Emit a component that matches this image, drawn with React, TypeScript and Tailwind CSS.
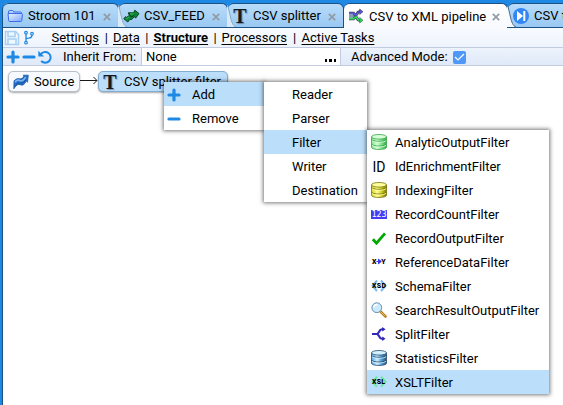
import React from "react";

type TabProps = {
  label: string;
  icon: React.ReactNode;
  className: string;
  active?: boolean;
  slant?: boolean;
  slantFill?: string;
  closable?: boolean;
};

function Tab({ label, icon, className, active, slant, slantFill = "#d8e9f8", closable = true }: TabProps) {
  return (
    <div
      className={`relative flex h-[25px] shrink-0 items-center rounded-t-[6px] border-t border-r border-[#1c5184] ${
        active ? "bg-linear-to-b from-white to-[#f8fafe]" : "border-b bg-linear-to-b from-[#b9dcf9] to-[#98c8f2]"
      } ${className}`}
    >
      {slant && (
        <svg className="absolute -left-px top-0 h-[23px] w-[9px]" viewBox="0 0 9 23">
          <path d="M0 1C2 4 2 8 3.5 13C4.5 18 6 22 9 23H0Z" fill={slantFill} />
          <path d="M0 1C2 4 2 8 3.5 13C4.5 18 6 22 9 23" fill="none" stroke={slantFill === "#f8fafe" ? "#496983" : "#8baac4"} strokeWidth="1" />
        </svg>
      )}
      <span className="relative flex h-4 w-4 shrink-0 items-center justify-center">{icon}</span>
      <span className="ml-[5px] mt-px whitespace-nowrap">{label}</span>
      {closable && (
        <svg className="absolute right-[7px] top-[9px] h-2 w-2" viewBox="0 0 8 8">
          <path d="M.8.8 7.2 7.2M7.2.8.8 7.2" stroke="#929ba3" strokeWidth="1.7" />
        </svg>
      )}
    </div>
  );
}

function FolderIcon() {
  return (
    <svg width="16" height="16" viewBox="0 0 16 16">
      <defs>
        <linearGradient id="folder" x1="0" y1="0" x2="1" y2="1">
          <stop stopColor="#eef4ff" />
          <stop offset="1" stopColor="#78a4ff" />
        </linearGradient>
      </defs>
      <path d="M1.5 12V4q0-1.5 1-1.5h3q1 0 1.3 1.5h6.7q1 0 1 1V12" fill="#b4ceff" stroke="#3c6ce8" />
      <path d="M1 5.5h13.6q.9 0 .8 1l-.6 6q-.1 1-1 1H2.8q-1 0-1.1-1Z" fill="url(#folder)" stroke="#3c6ce8" />
    </svg>
  );
}

function FeedIcon() {
  return (
    <svg className="shrink-0" width="17" height="16" viewBox="0 0 17 16">
      <path d="M.8 10.8 2.6 8.6 3.6 9.4 6.5 7.2 5.2 4.8H10.6L11.8 2.2 16 5.6 12.6 10.2 11.4 8.4 8.8 11.4H6.8L4.8 14Z" fill="#078a35" stroke="#08351c" strokeWidth=".9" strokeLinejoin="round" />
      <path d="M5.4 5 7.7 8.4 9.7 8.4 11.4 6.4" stroke="#08351c" strokeWidth=".9" fill="none" />
      <path d="M3.3 10.8 6 9M7 5.9h4" stroke="#35bd59" strokeWidth="1" fill="none" />
    </svg>
  );
}

function TIcon() {
  return <span className="font-['Liberation_Serif',serif] text-[20px] font-bold leading-4 text-[#17191d] [text-shadow:1px_1px_1px_#00000055]">T</span>;
}

function PipelineIcon() {
  return (
    <svg width="16" height="16" viewBox="0 0 16 16" fill="none">
      <path d="M1 5.2h4.5L8.2 8M1 10.8h4.5L8.2 8M13 3.7h-1.2Q9.7 3.7 9.2 5.7L7.5 8l1.7 2.3Q9.7 12.3 12 12.3h1" stroke="#34495e" strokeWidth="2.8" />
      <path d="M1 5.2h4.5L8 7.7M7.7 7.8 9.2 5.7Q9.7 3.7 12 3.7h1" stroke="#6355df" strokeWidth="1.5" />
      <path d="M1 10.8h4.5L8 8.3M7.7 8.2 9.2 10.3Q9.7 12.3 12 12.3h1" stroke="#34dd59" strokeWidth="1.5" />
      <path d="m11.7 1 3.3 2.7-3.3 2.7Z" fill="#6355df" stroke="#34405e" strokeWidth=".6" />
      <path d="m11.7 9.6 3.3 2.7-3.3 2.7Z" fill="#34dd59" stroke="#286347" strokeWidth=".6" />
      <path d="M1 8h7" stroke="#245f80" strokeWidth="1.2" />
    </svg>
  );
}

function StepIcon() {
  return (
    <svg width="16" height="16" viewBox="0 0 16 16">
      <circle cx="8" cy="8" r="8" fill="#3287f4" />
      <path d="m4 3 6 5-6 5Z" fill="white" />
      <path d="M11.3 3v10" stroke="white" strokeWidth="2" />
    </svg>
  );
}

function SourceIcon() {
  return (
    <svg width="16" height="16" viewBox="0 0 16 16">
      <path d="M1 6.8Q4 3.6 6.8 4.8Q9 5.8 11 2.1L10.2 1.2H15.3L14.5 8.2L13.2 7Q10.6 12.6 7.1 10.7Q4.3 9.2.8 14.8Z" fill="#2574ce" stroke="#144d94" strokeWidth=".7" />
      <path d="M2 8Q4.5 5 7 6.7Q10 8 12.6 3" fill="none" stroke="#80b9f5" strokeWidth="1.5" />
      <path d="M1.8 12Q5 7.8 7.7 9Q10.5 10.2 13 5.5" fill="none" stroke="#154f9c" strokeWidth="1" />
    </svg>
  );
}

function Plus() {
  return <svg width="14" height="14" viewBox="0 0 14 14"><path d="M7 2v10M2 7h10" stroke="#1e88e5" strokeWidth="3.2" strokeLinecap="round" /></svg>;
}

function Minus() {
  return <svg width="14" height="14" viewBox="0 0 14 14"><path d="M2 7h10" stroke="#1e88e5" strokeWidth="3.2" strokeLinecap="round" /></svg>;
}

function Database({ light, mid, dark, id }: { light: string; mid: string; dark: string; id: string }) {
  return (
    <svg width="16" height="16" viewBox="0 0 16 16">
      <defs>
        <linearGradient id={id}>
          <stop stopColor={mid} />
          <stop offset=".38" stopColor={light} />
          <stop offset=".65" stopColor={mid} />
          <stop offset="1" stopColor={dark} />
        </linearGradient>
      </defs>
      <path d="M.5 2.7v10.6C.5 16.2 15.5 16.2 15.5 13.3V2.7" fill={`url(#${id})`} stroke={dark} strokeWidth=".8" />
      <ellipse cx="8" cy="2.8" rx="7.5" ry="2.3" fill={light} stroke={dark} strokeWidth=".8" />
      <path d="M.5 5.4C1 8 15 8 15.5 5.4M.5 10C1 12.8 15 12.8 15.5 10" fill="none" stroke={dark} strokeWidth="1" />
      <path d="M1 6.5C2 8.8 14 8.8 15 6.5M1 11C2 13.6 14 13.6 15 11" fill="none" stroke={light} strokeWidth=".9" />
    </svg>
  );
}

const iconText = "font-[Roboto,sans-serif] text-[7px] font-black leading-4";

const filters: { name: string; icon: React.ReactNode }[] = [
  { name: "AnalyticOutputFilter", icon: <Database id="db-green" light="#d7ffd7" mid="#82df89" dark="#36a64a" /> },
  { name: "IdEnrichmentFilter", icon: <span className="mt-px text-[14px] leading-4">ID</span> },
  { name: "IndexingFilter", icon: <Database id="db-yellow" light="#ffff9b" mid="#d7d426" dark="#77750a" /> },
  { name: "RecordCountFilter", icon: <span className="mt-px block h-[9px] w-4 overflow-hidden bg-[#423df5] text-center font-['DejaVu_Sans',sans-serif] text-[8px] leading-[9px] text-white tracking-[-0.2px]">123</span> },
  { name: "RecordOutputFilter", icon: <svg width="16" height="16" viewBox="0 0 16 16"><path d="m1.8 9.2 3.7 4L14 3.4" fill="none" stroke="#00a900" strokeWidth="2.8" /></svg> },
  { name: "ReferenceDataFilter", icon: <svg width="16" height="16" viewBox="0 0 16 16"><path d="M5.4 7.5h3M7.5 5.2 10.3 7.5 7.5 9.8Z" stroke="#3835ee" strokeWidth="1" fill="#3835ee" /><text x="1" y="10" className={iconText}>X</text><text x="10.3" y="10" className={iconText}>Y</text></svg> },
  { name: "SchemaFilter", icon: <svg width="16" height="16" viewBox="0 0 16 16"><path d="m6 2.5-4.5 5.3L6 13M10 2.5l4.5 5.3L10 13" fill="none" stroke="#74b8f2" strokeWidth="2" /><text x="1" y="10.3" className={iconText} textLength="14">XSD</text></svg> },
  { name: "SearchResultOutputFilter", icon: <svg width="16" height="16" viewBox="0 0 16 16"><path d="m9.5 9.5 5 5" stroke="#b77b20" strokeWidth="2.5" strokeLinecap="round" /><path d="m9.5 9.5 4.4 4.3" stroke="#edbd53" strokeWidth="1" /><circle cx="5.8" cy="5.7" r="4.9" fill="#caebff" stroke="#6a8faf" /><path d="M2.7 5.4Q3.4 2.5 6.3 2.5" fill="none" stroke="white" strokeWidth="1.6" /></svg> },
  { name: "SplitFilter", icon: <svg width="16" height="16" viewBox="0 0 16 16"><path d="M1 8h5.4M13 3.2h-1.5Q9 3.2 8.5 5.2L6.5 8l2 2.8Q9 12.8 11.5 12.8H13" fill="none" stroke="#3128b8" strokeWidth="2" /><path d="m11.2.9 3.4 2.3-3.4 2.3M11.2 10.5l3.4 2.3-3.4 2.3" fill="#3128b8" /></svg> },
  { name: "StatisticsFilter", icon: <Database id="db-blue" light="#d2f1ff" mid="#4fa2df" dark="#294d6f" /> },
  { name: "XSLTFilter", icon: <svg width="16" height="16" viewBox="0 0 16 16"><path d="m6 2.7-4.5 5 4.5 5M10 2.7l4.5 5-4.5 5" fill="none" stroke="#68e7a1" strokeWidth="2" /><text x="1" y="10" className={iconText} textLength="13">XSL</text></svg> },
];

const groups = ["Reader", "Parser", "Filter", "Writer", "Destination"];
const menu = "absolute bg-white shadow-[0_0_4px_1px_#00000088]";

function Navigation() {
  return (
    <nav className="flex h-[19px] items-center bg-linear-to-b from-[#f8fafe] to-[#eef4fc]">
      <svg className="ml-px shrink-0" width="16" height="16" viewBox="0 0 16 16">
        <path d="M1.5 1.5h10l3 3v10h-13Z" fill="#eff7ff" stroke="#a7cff4" strokeWidth="1.5" />
        <path d="M4 2v4.5h7V2M4 14V9h8v5" fill="none" stroke="#a7cff4" strokeWidth="1.5" />
      </svg>
      <svg className="ml-0.5 shrink-0" width="16" height="16" viewBox="0 0 16 16">
        <path d="M4 4v7.5M4 9.5q0-1.2 2.8-1.3Q10 8 10 5" fill="none" stroke="#1e88e5" strokeWidth="1.3" />
        <circle cx="4" cy="2.7" r="1.3" fill="white" stroke="#1e88e5" strokeWidth="1.2" />
        <circle cx="10" cy="3.7" r="1.3" fill="white" stroke="#1e88e5" strokeWidth="1.2" />
        <circle cx="4" cy="12.7" r="1.3" fill="white" stroke="#1e88e5" strokeWidth="1.2" />
      </svg>
      <div className="ml-[13.5px] flex items-center whitespace-nowrap underline-offset-2">
        <a className="w-[48px] underline">Settings</a><span className="w-[13.5px] text-center">|</span>
        <a className="w-[27px] underline">Data</a><span className="w-[13.5px] text-center">|</span>
        <a className="w-[55px] font-bold underline">Structure</a><span className="w-[13px] text-center">|</span>
        <a className="w-[66px] underline">Processors</a><span className="w-[14px] text-center">|</span>
        <a className="underline">Active Tasks</a>
      </div>
    </nav>
  );
}

export default function App() {
  return (
    <main className="relative h-[405px] w-[563px] overflow-hidden bg-[#1e88e5] pl-[2px] pt-[3px] font-[Roboto,sans-serif] text-[13px] leading-4 text-black">
      <div className="flex h-[402px] flex-col rounded-tl-[6px] border-l border-[#1c5184] bg-white">
        <header className="flex h-[25px] shrink-0 rounded-tl-[6px] bg-[#1e88e5]">
          <Tab className="w-[116px] pl-[4px]" label="Stroom 101" icon={<FolderIcon />} />
          <Tab className="w-[109px] pl-[4px]" label="CSV_FEED" icon={<FeedIcon />} slant />
          <Tab className="w-[116px] pl-[4px]" label="CSV splitter" icon={<TIcon />} slant />
          <Tab className="w-[164px] pl-[4px]" label="CSV to XML pipeline" icon={<PipelineIcon />} active />
          <Tab className="w-[110px] pl-[5px]" label="CSV to JSON" icon={<StepIcon />} slant slantFill="#f8fafe" closable={false} />
        </header>
        <Navigation />
        <div className="flex h-[19px] shrink-0 items-center border-y border-[#c3cbe0] bg-linear-to-b from-[#edf3fc] to-[#dfe9f8]">
          <span className="ml-[3px] shrink-0"><Plus /></span>
          <span className="ml-[2px] shrink-0"><Minus /></span>
          <svg className="ml-px shrink-0" width="16" height="16" viewBox="0 0 16 16">
            <path d="M3.5 5.8A5.4 5.4 0 1 1 4.2 12" fill="none" stroke="#1e88e5" strokeWidth="2" />
            <path d="M1.3 1.7v5.8h5.8Z" fill="#1e88e5" />
          </svg>
          <span className="ml-[10px] mt-px w-[78px] whitespace-nowrap">Inherit From:</span>
          <div className="relative h-full w-[200px] border-r border-l border-[#c3cbe0] bg-white pl-[4px] pt-px">
            None
            <span className="absolute right-1 top-[11px] flex gap-[2px]">
              <i className="h-[2.5px] w-[2.5px] bg-black" /><i className="h-[2.5px] w-[2.5px] bg-black" /><i className="h-[2.5px] w-[2.5px] bg-black" />
            </span>
          </div>
          <span className="ml-[10px] mt-px w-[102px] whitespace-nowrap">Advanced Mode:</span>
          <span className="mt-px flex h-[13px] w-[13px] items-center justify-center rounded-[2px] bg-[#4f98f8]">
            <svg width="11" height="11" viewBox="0 0 11 11"><path d="m1 5 3 3 6-6" fill="none" stroke="white" strokeWidth="1.2" /></svg>
          </span>
        </div>
        <section className="flex pl-[5px] pt-[5px]">
          <div className="flex h-[21px] w-[72px] items-center rounded-[5px] border border-[#b8c0c9] bg-[#f6faff] pl-1 shadow-[0_1px_2px_#aaa]">
            <SourceIcon /><span className="ml-[5px]">Source</span>
          </div>
          <svg width="18" height="21" viewBox="0 0 18 21"><path d="M0 9.5h17M13.5 6l3.5 3.5-3.5 3.5" fill="none" stroke="#16181b" /></svg>
          <div className="flex h-[21px] w-[130px] items-center rounded-[5px] border border-[#83acd0] bg-[#bbdefb] pl-[3px] shadow-[0_1px_2px_#aaa]">
            <span className="flex w-4 justify-center"><TIcon /></span><span className="ml-[6px] whitespace-nowrap">CSV splitter filter</span>
          </div>
        </section>
      </div>
      <div className={`${menu} left-[164px] top-[82px] w-[100px]`}>
        <div className="flex h-6 items-center bg-[#bbdefb] pl-[3px] pt-px"><Plus /><span className="ml-[11px] mt-px">Add</span></div>
        <div className="flex h-6 items-center pl-[3px] pt-px"><Minus /><span className="ml-[11px] mt-px">Remove</span></div>
      </div>
      <div className={`${menu} left-[264px] top-[82px] w-[103px]`}>
        {groups.map((label) => <div key={label} className={`flex h-6 items-center pl-7 pt-0.5 ${label === "Filter" ? "bg-[#bbdefb]" : ""}`}>{label}</div>)}
      </div>
      <div className={`${menu} left-[367px] top-[130px] w-[182px]`}>
        {filters.map(({ name, icon }) => (
          <div key={name} className={`flex h-6 items-center pl-1 ${name === "XSLTFilter" ? "bg-[#bbdefb]" : ""}`}>
            <span className="flex h-4 w-4 shrink-0 items-center justify-center">{icon}</span><span className="ml-2 mt-0.5">{name}</span>
          </div>
        ))}
      </div>
    </main>
  );
}
